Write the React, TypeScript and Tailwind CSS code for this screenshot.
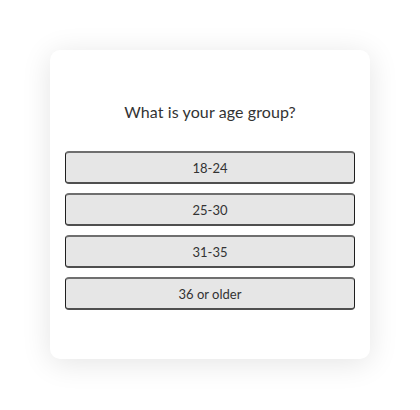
export default function App() {
  const options = ["18-24", "25-30", "31-35", "36 or older"];
  return (
    <div className="w-[420px] h-[410px] bg-white pt-[50px] pl-[50px]" style={{ fontFamily: "Lato, 'Open Sans', sans-serif" }}>
      <div className="w-[320px] h-[309px] bg-white rounded-[10px] shadow-[0_4px_30px_rgba(0,0,0,0.11)] px-[15px] pt-[50px]">
        <div className="text-center text-[16px] leading-6 text-[#333] tracking-[0.1px]">What is your age group?</div>
        <div className="mt-[27px] flex flex-col gap-[9px]">
          {options.map((o) => (
            <div
              key={o}
              className="h-[33px] pt-[2px] flex items-center justify-center rounded-[4px] bg-[#e6e6e6] border-x border-x-[#1f1f1f] border-t-2 border-t-[#6f6f6f] border-b-2 border-b-[#4f4f4f] text-[13px] text-[#333]"
            >
              {o}
            </div>
          ))}
        </div>
      </div>
    </div>
  );
}
